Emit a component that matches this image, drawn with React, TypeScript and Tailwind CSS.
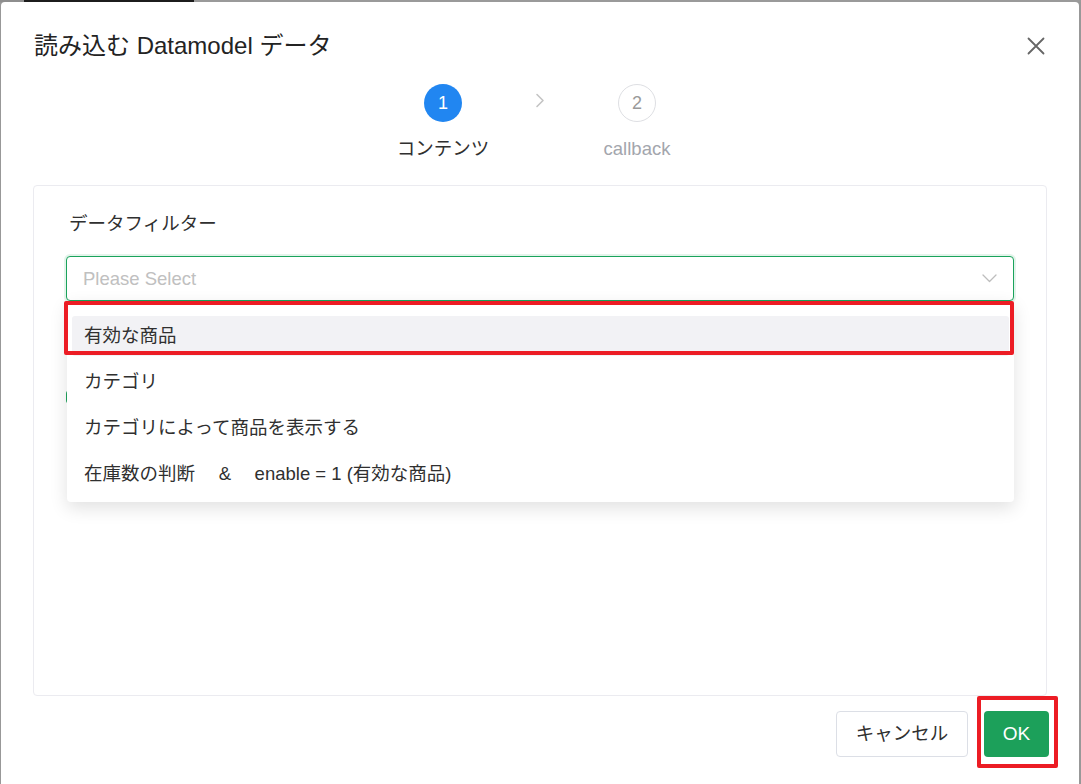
import React from "react";

function CloseIcon() {
  return (
    <svg width="18" height="18" viewBox="0 0 18 18" fill="none">
      <path d="M1.5 1.5 L16.5 16.5 M16.5 1.5 L1.5 16.5" stroke="#666" strokeWidth="1.8" strokeLinecap="round" />
    </svg>
  );
}

function ChevronRight() {
  return (
    <svg width="10" height="15" viewBox="0 0 10 15" fill="none">
      <path d="M2 1.5 L8 7.5 L2 13.5" stroke="#c4c4c4" strokeWidth="1.6" strokeLinecap="round" strokeLinejoin="round" />
    </svg>
  );
}

function ChevronDown() {
  return (
    <svg width="15" height="9" viewBox="0 0 15 9" fill="none">
      <path d="M1 1 L7.5 7.5 L14 1" stroke="#bdbdbd" strokeWidth="1.3" strokeLinecap="round" strokeLinejoin="round" />
    </svg>
  );
}

const items = [
  "有効な商品",
  "カテゴリ",
  "カテゴリによって商品を表示する",
  "在庫数の判断\u3000 &\u3000 enable = 1 (有効な商品)",
];

export default function App() {
  return (
    <div className="relative w-[1081px] h-[784px] overflow-hidden bg-[#989898] font-['Liberation_Sans','Noto_Sans_CJK_JP',sans-serif]">
      {/* background strip */}
      <div className="flex h-[2px]">
        <div className="w-[24px] bg-[#8e8e8e]" />
        <div className="w-[170px] bg-[#1c1c1c]" />
        <div className="flex-1 bg-[#9a9a9a]" />
      </div>

      {/* dialog */}
      <div className="ml-[1px] w-[1078px] h-[800px] bg-white rounded-t-[4px] flex flex-col">
        {/* header */}
        <div className="flex items-center justify-between pl-[33px] pr-[34px] pt-[29px]">
          <div className="text-[24px] leading-[30px] text-[#232323]">読み込む Datamodel データ</div>
          <CloseIcon />
        </div>

        {/* steps */}
        <div className="flex justify-center items-start mt-[23px]">
          <div className="w-[120px] flex flex-col items-center">
            <div className="w-[38px] h-[38px] rounded-full bg-[#2186f1] flex items-center justify-center text-white text-[18px] leading-none">
              1
            </div>
            <div className="mt-[14px] text-[18.5px] leading-[26px] text-[#303030]">コンテンツ</div>
          </div>
          <div className="w-[74px] flex justify-center pt-[9px]">
            <ChevronRight />
          </div>
          <div className="w-[120px] flex flex-col items-center">
            <div className="w-[38px] h-[38px] rounded-full border border-[#dedfe3] flex items-center justify-center text-[#9a9a9a] text-[18px] leading-none">
              2
            </div>
            <div className="mt-[14px] text-[18.5px] leading-[26px] text-[#a3a6ad]">callback</div>
          </div>
        </div>

        {/* content panel */}
        <div className="relative mx-[32px] mt-[23px] h-[511px] border border-[#ebebf0] rounded-[4px] px-[32px] pt-[26px]">
          <div className="pl-[3px] text-[18.5px] leading-[24px] text-[#303030]">データフィルター</div>

          <div className="relative mt-[20px]">
            {/* hidden green control behind dropdown */}
            <div className="absolute left-0 top-[134px] w-[18px] h-[14px] rounded-[4px] bg-[#1ea35c]" />

            <div className="relative h-[45px] border border-[#1aa35b] rounded-[4px] shadow-[0_0_0_2px_rgba(26,163,91,0.12)] flex items-center justify-between pl-[16px] pr-[16px] bg-white">
              <span className="text-[18.5px] text-[#c0c0c0]">Please Select</span>
              <ChevronDown />
            </div>

            {/* dropdown */}
            <div className="absolute left-[1px] top-[45px] w-[947px] bg-white rounded-b-[4px] shadow-[0_6px_18px_rgba(0,0,0,0.12)] pt-[12px] pb-[5px] px-[5px] z-10">
              {items.map((t, i) => (
                <div key={i} className="h-[46px] py-[3px]">
                  <div
                    className={
                      "h-[40px] flex items-center px-[12px] rounded-[3px] text-[18.5px] text-[#303030] whitespace-pre " +
                      (i === 0 ? "bg-[#f2f2f5]" : "")
                    }
                  >
                    {t}
                  </div>
                </div>
              ))}
            </div>

            {/* red annotation on first item */}
            <div className="absolute left-[-2px] top-[45px] w-[950px] h-[54px] border-[4px] border-[#ec1c24] rounded-[2px] z-20" />
          </div>
        </div>

        {/* footer */}
        <div className="flex justify-end items-center gap-[16px] pr-[30px] mt-[15px]">
          <div className="w-[132px] h-[46px] border border-[#dcdfe6] rounded-[4px] flex items-center justify-center text-[18.5px] text-[#303030] bg-white">
            キャンセル
          </div>
          <div className="relative w-[65px] h-[46px] rounded-[4px] bg-[#1ca05a] flex items-center justify-center text-[19px] text-white">
            OK
            <div className="absolute left-[-7px] top-[-15px] w-[81px] h-[72px] border-[4px] border-[#ec1c24] rounded-[2px]" />
          </div>
        </div>
      </div>
    </div>
  );
}
